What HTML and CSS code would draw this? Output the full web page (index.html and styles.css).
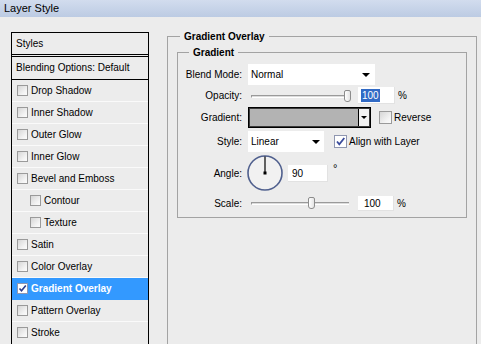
FILE: index.html
```html
<!DOCTYPE html>
<html>
<head>
<meta charset="utf-8">
<link rel="stylesheet" href="styles.css">
</head>
<body>
<div class="titlebar">Layer Style</div>
<div class="main">
  <ul class="styles-list">
    <li class="head">Styles</li>
    <li class="blend">Blending Options: Default</li>
    <li class="item"><span class="cb"></span>Drop Shadow</li>
    <li class="item"><span class="cb"></span>Inner Shadow</li>
    <li class="item"><span class="cb"></span>Outer Glow</li>
    <li class="item"><span class="cb"></span>Inner Glow</li>
    <li class="item"><span class="cb"></span>Bevel and Emboss</li>
    <li class="item sub"><span class="cb"></span>Contour</li>
    <li class="item sub"><span class="cb"></span>Texture</li>
    <li class="item"><span class="cb"></span>Satin</li>
    <li class="item"><span class="cb"></span>Color Overlay</li>
    <li class="item selected"><span class="cb checked"><svg viewBox="0 0 9 9" width="9" height="9"><path d="M1.5 4.5 L3.5 6.8 L7.8 1.5" fill="none" stroke="#2c3c8c" stroke-width="1.6"/></svg></span>Gradient Overlay</li>
    <li class="item"><span class="cb"></span>Pattern Overlay</li>
    <li class="item last"><span class="cb"></span>Stroke</li>
  </ul>
  <div class="settings">
    <fieldset class="outer">
      <legend>Gradient Overlay</legend>
      <fieldset class="inner">
        <legend>Gradient</legend>
        <div class="row r-blend">
          <span class="lbl">Blend Mode:</span>
          <div class="ctl">
            <div class="select sel-blend"><span>Normal</span><span class="arrow"></span></div>
          </div>
        </div>
        <div class="row r-opacity">
          <span class="lbl">Opacity:</span>
          <div class="ctl">
            <div class="slider"><span class="track"></span><span class="thumb" style="left:96px"></span></div>
            <div class="input in-opacity"><span class="hl">100</span></div>
            <span class="unit">%</span>
          </div>
        </div>
        <div class="row r-gradient">
          <span class="lbl">Gradient:</span>
          <div class="ctl">
            <div class="gradbox"><span class="swatch"></span><span class="gradarrow"><span class="arrow small"></span></span></div>
            <span class="cb big cb-rev"></span><span class="cbtext">Reverse</span>
          </div>
        </div>
        <div class="row r-style">
          <span class="lbl">Style:</span>
          <div class="ctl">
            <div class="select sel-style"><span>Linear</span><span class="arrow"></span></div>
            <span class="cb big checked cb-align"><svg viewBox="0 0 11 11" width="11" height="11"><path d="M2 5.5 L4.3 8.3 L9.3 2" fill="none" stroke="#3a4c9c" stroke-width="1.8"/></svg></span><span class="cbtext">Align with Layer</span>
          </div>
        </div>
        <div class="row r-angle">
          <span class="lbl">Angle:</span>
          <div class="ctl">
            <svg class="dial" viewBox="0 0 36 36" width="36" height="36">
              <circle cx="18" cy="18" r="17" fill="#f1f1f1" stroke="#50608e" stroke-width="1.6"/>
              <line x1="18" y1="18" x2="18" y2="1.5" stroke="#000" stroke-width="1.2"/>
              <rect x="16.5" y="16.5" width="3" height="3" fill="#000"/>
            </svg>
            <div class="input in-angle">90</div>
            <span class="deg">°</span>
          </div>
        </div>
        <div class="row r-scale">
          <span class="lbl">Scale:</span>
          <div class="ctl">
            <div class="slider"><span class="track"></span><span class="thumb" style="left:60px"></span></div>
            <div class="input in-scale">100</div>
            <span class="unit">%</span>
          </div>
        </div>
      </fieldset>
    </fieldset>
  </div>
</div>
</body>
</html>
```

FILE: styles.css
```css
* { box-sizing: border-box; }
html, body { margin: 0; padding: 0; }
body {
  width: 481px;
  height: 344px;
  overflow: hidden;
  background: #ececec;
  font: 10px "Liberation Sans", Arial, sans-serif;
  color: #000;
}
.titlebar {
  height: 17px;
  line-height: 17px;
  padding-left: 4px;
  font-size: 11px;
  background: linear-gradient(#d2dcee, #bccbe3);
}
.main {
  display: flex;
  padding: 13px 0 0 11px;
}
.styles-list {
  list-style: none;
  margin: 2px 0 0 0;
  padding: 0;
  width: 138px;
  height: 312px;
  border: 1px solid #000;
  border-bottom: 0;
  flex: none;
  overflow: hidden;
}
.head {
  height: 24px;
  line-height: 21px;
  padding-left: 4px;
  border-bottom: 3px double #000;
}
.blend {
  height: 23px;
  line-height: 22px;
  padding-left: 4px;
  border-bottom: 1px solid #000;
}
.item {
  height: 22px;
  border-bottom: 1px solid #fafafa;
  display: flex;
  align-items: center;
  padding-left: 5px;
  gap: 3px;
}
.item.last { height: 21px; border-bottom: 0; }
.item.sub { padding-left: 18px; }
.item.selected {
  background: #3399ff;
  color: #fff;
  font-weight: bold;
  border-bottom-color: #3399ff;
}
.cb {
  width: 11px;
  height: 11px;
  flex: none;
  border: 1px solid #9a9a9a;
  background: linear-gradient(135deg, #d6d6d6, #f4f4f4 70%, #fbfbfb);
  display: inline-flex;
  align-items: center;
  justify-content: center;
}
.cb.checked { background: #fff; border-color: #8f96b0; }
.cb.big { width: 13px; height: 13px; }
.settings {
  margin-left: 18px;
  flex: none;
}
fieldset {
  margin: 0;
  min-width: 0;
  border: 1px solid #a3a3a3;
}
legend {
  font-weight: bold;
  line-height: 13px;
  padding: 0 4px;
}
.outer {
  width: 310px;
  height: 314px;
  border-bottom: 0;
  padding: 3px 9px 0 9px;
}
.outer > legend { margin-left: 3px; }
.inner {
  width: 290px;
  padding: 0 0 6px 0;
}
.inner > legend { margin-left: 11px; }
.row {
  display: grid;
  grid-template-columns: 64px 1fr;
  column-gap: 6px;
  align-items: center;
}
.lbl { text-align: right; }
.ctl {
  display: flex;
  align-items: center;
  height: 100%;
}
.r-blend { height: 21px; margin-top: 5px; }
.r-opacity { height: 17px; margin-top: 2px; }
.r-gradient { height: 21px; margin-top: 3px; }
.r-style { height: 21px; margin-top: 3px; }
.r-angle { height: 36px; margin-top: 3px; }
.r-scale { height: 16px; margin-top: 4px; }
.select {
  height: 21px;
  background: #fff;
  display: flex;
  align-items: center;
  justify-content: space-between;
  padding: 0 5px 0 3px;
}
.sel-blend { width: 127px; }
.sel-style { width: 76px; padding-right: 4px; }
.arrow {
  width: 0;
  height: 0;
  border-left: 4px solid transparent;
  border-right: 4px solid transparent;
  border-top: 4px solid #000;
}
.arrow.small {
  border-left-width: 3px;
  border-right-width: 3px;
  border-top-width: 3px;
}
.slider {
  position: relative;
  width: 104px;
  height: 100%;
  flex: none;
}
.track {
  position: absolute;
  left: 3px;
  width: 98px;
  top: 50%;
  height: 3px;
  margin-top: -1px;
  border-top: 1px solid #9a9a9a;
  border-bottom: 1px solid #fff;
  border-left: 1px solid #9a9a9a;
  background: #dcdcdc;
}
.thumb {
  position: absolute;
  top: 50%;
  margin-top: -6px;
  width: 7px;
  height: 12px;
  border: 1px solid #8c8c8c;
  border-radius: 2px 2px 3px 3px;
  background: linear-gradient(90deg, #fff, #e4e4e4);
}
.input {
  background: #fff;
  height: 17px;
  line-height: 17px;
  padding-left: 3px;
  border-right: 1px solid #e2e2e2;
  border-bottom: 1px solid #e2e2e2;
  flex: none;
}
.in-opacity { width: 37px; margin-left: 6px; }
.in-scale { width: 36px; margin-left: 6px; height: 15px; line-height: 15px; padding-left: 6px; }
.in-angle { width: 40px; margin-left: 5px; padding-left: 4px; }
.hl {
  background: #316ac5;
  color: #fff;
  padding: 1px 1px;
}
.unit { margin-left: 3px; }
.deg { margin-left: 5px; align-self: flex-start; margin-top: 8px; font-size: 11px; line-height: 11px; }
.gradbox {
  width: 123px;
  height: 21px;
  border: 1px solid #000;
  box-shadow: inset 0 0 0 1px #3a3a3a;
  display: flex;
  flex: none;
}
.swatch {
  flex: 1;
  margin: 1px 0 1px 1px;
  background: #b3b3b3;
}
.gradarrow {
  width: 11px;
  margin: 1px 1px 1px 0;
  border-left: 1px solid #000;
  background: #f2f2f2;
  display: flex;
  align-items: center;
  justify-content: center;
}
.cb-rev { margin-left: 8px; }
.cb-align { margin-left: 10px; }
.cbtext { margin-left: 2px; }
.dial { margin-left: -1px; flex: none; }
```
